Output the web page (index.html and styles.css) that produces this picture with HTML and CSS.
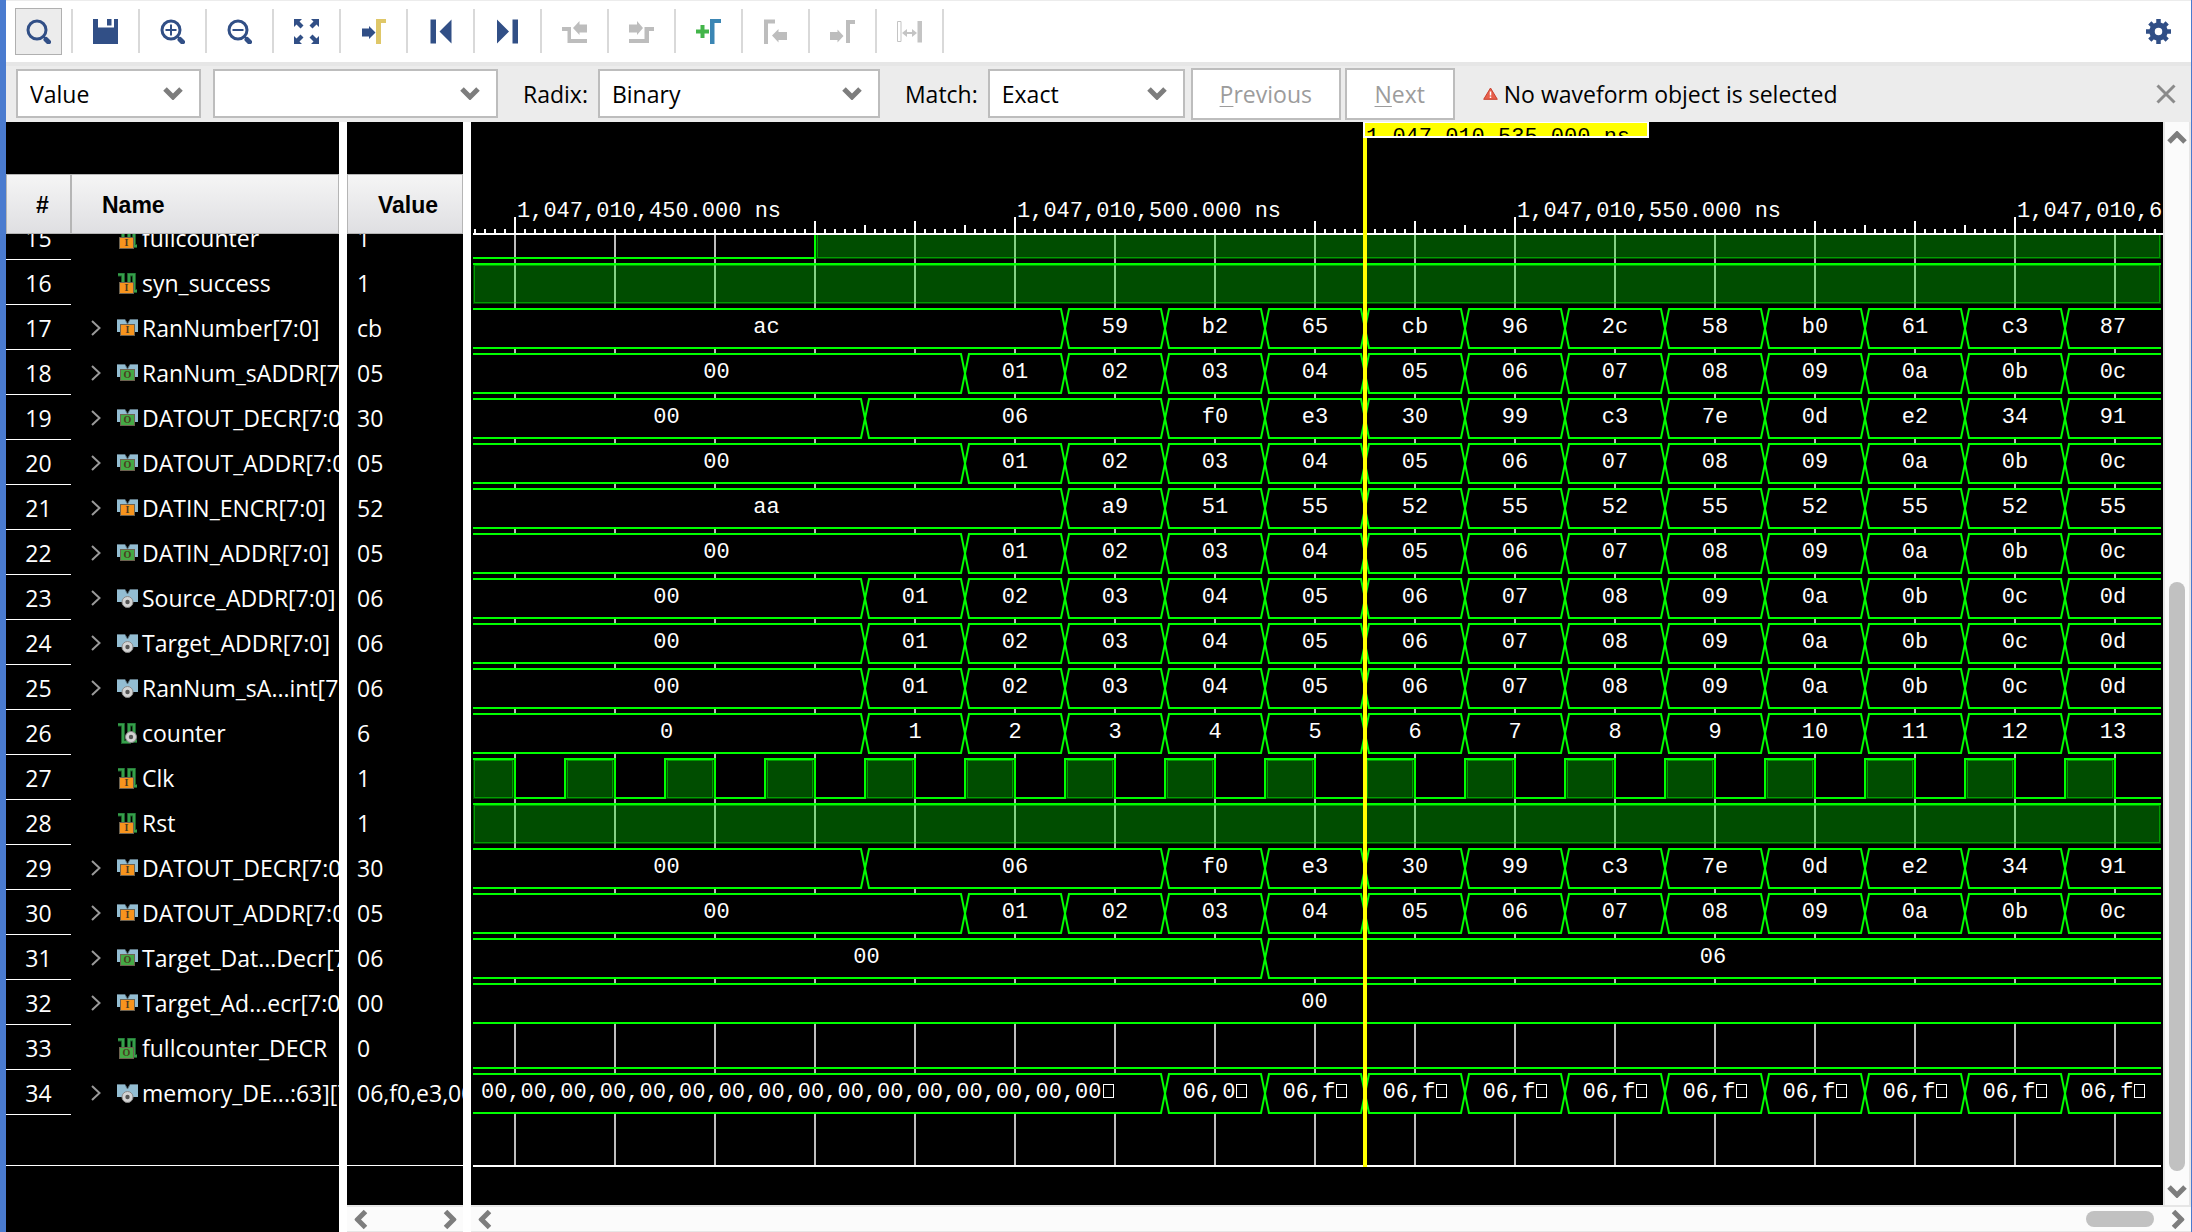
FILE: index.html
```html
<!DOCTYPE html>
<html lang="en">
<head>
<meta charset="utf-8">
<title>Waveform</title>
<link rel="stylesheet" href="styles.css">
</head>
<body>
<svg class="defs" aria-hidden="true">
  <symbol id="chevron" viewBox="0 0 20 13"><path d="M2 2l8 8 8-8" fill="none" stroke="#7d7d7d" stroke-width="5"/></symbol>
  <symbol id="lens" viewBox="0 0 25 25"><circle cx="11" cy="11" r="9" fill="none" stroke="#314f86" stroke-width="3"/><path d="M17 17l3 3" stroke="#314f86" stroke-width="2"/><path d="M20 20.500l2.500 2.500" stroke="#314f86" stroke-width="5" stroke-linecap="round"/></symbol>
  <symbol id="bus" viewBox="0 0 21 21"><path d="M0 1.500H8L10.500 6 13 1.500H21V14H0z" fill="#93bdd2"/><path d="M0 1.500H8L10.500 6 13 1.500H21" fill="none" stroke="#5c7480"/></symbol>
  <symbol id="bit" viewBox="0 0 21 21"><path d="M1 1.500H6V19H12V1.500H17V18H20" fill="none" stroke="#1d5f2b" stroke-width="4"/><path d="M1 1.500H6V19H12V1.500H17V18H20" fill="none" stroke="#35a04a" stroke-width="2"/></symbol>
</svg>
<div class="window">
  <div class="toolbar" role="toolbar" aria-label="Waveform tools">
    <div class="tool"><button class="tool-button active" aria-label="Find"><svg viewBox="0 0 25 25"><use href="#lens"/></svg></button></div>
    <div class="tool"><button class="tool-button" aria-label="Save"><svg viewBox="0 0 25 25" fill="#314f86"><path d="M0 0h5v8.500h16V0h4v25H0zM14 0h4.500v6.500H14z"/></svg></button></div>
    <div class="tool"><button class="tool-button" aria-label="Zoom in"><svg viewBox="0 0 25 25"><use href="#lens"/><path d="M5.500 11h11M11 5.500v11" stroke="#314f86" stroke-width="2"/></svg></button></div>
    <div class="tool"><button class="tool-button" aria-label="Zoom out"><svg viewBox="0 0 25 25"><use href="#lens"/><path d="M5.500 11h11" stroke="#314f86" stroke-width="2"/></svg></button></div>
    <div class="tool"><button class="tool-button" aria-label="Zoom fit"><svg viewBox="0 0 25 25" fill="#314f86"><path d="M0 0h8L5.500 2.500l4 4-3 3-4-4L0 8zM25 0v8l-2.500-2.500-4 4-3-3 4-4L17 0zM0 25v-8l2.500 2.500 4-4 3 3-4 4L8 25zM25 25h-8l2.500-2.500-4-4 3-3 4 4L25 17z"/></svg></button></div>
    <div class="tool"><button class="tool-button" aria-label="Go to cursor"><svg viewBox="0 0 25 25"><path d="M1 9.500h7V7l6.500 6.500L8 20v-2.500H1z" fill="#314f86"/><path d="M15 0h10v4h-5v21h-5z" fill="#dfc768"/></svg></button></div>
    <div class="tool"><button class="tool-button" aria-label="Go to time 0"><svg viewBox="0 0 25 25" fill="#314f86"><path d="M2.500.500H8v24H2.500zM23.500.500v24l-12-12z"/></svg></button></div>
    <div class="tool"><button class="tool-button" aria-label="Go to last time"><svg viewBox="0 0 25 25" fill="#314f86"><path d="M17.500.500H23v24h-5.500zM2 .500v24l12-12z"/></svg></button></div>
    <div class="tool"><button class="tool-button" disabled aria-label="Previous transition"><svg viewBox="0 0 25 25" fill="#bdbdbd"><path d="M0 8h9v12h16v4H5.500V12H0zM11 9l6.500-7v3.500H25v8h-7.500V16z"/></svg></button></div>
    <div class="tool"><button class="tool-button" disabled aria-label="Next transition"><svg viewBox="0 0 25 25" fill="#bdbdbd"><path d="M25 8h-9.500v12H0v4h20V12h5zM14 9L8 2v3.500H0v8h8V16z"/></svg></button></div>
    <div class="tool"><button class="tool-button" aria-label="Add marker"><svg viewBox="0 0 25 25"><path d="M0 12.500h13M6.500 6v13" stroke="#43b54a" stroke-width="4"/><path d="M14 0h11v4h-6.500v21H14z" fill="#3b86b4"/></svg></button></div>
    <div class="tool"><button class="tool-button" disabled aria-label="Previous marker"><svg viewBox="0 0 25 25" fill="#bdbdbd"><path d="M1 .500h11v4H5V25H1zM9 16.500l6.500-6.500v3H24v8h-8.500v2.500z"/></svg></button></div>
    <div class="tool"><button class="tool-button" disabled aria-label="Next marker"><svg viewBox="0 0 25 25" fill="#bdbdbd"><path d="M16 1h9v4h-5v19h-4zM0 13h7.500v-2.500l6 6.500-6 6.500V21H0z"/></svg></button></div>
    <div class="tool"><button class="tool-button" disabled aria-label="Swap cursors"><svg viewBox="0 0 25 25" fill="#c4c4c4"><path d="M.500 2.500h3.500v20H.500z" fill="none" stroke="#c4c4c4"/><path d="M20.500 2H25v21.500h-4.500zM5 14l5-4v3h5v-3l5 4-5 4v-3h-5v3z"/></svg></button></div>
    <button class="tool-button settings" aria-label="Settings"><svg viewBox="0 0 25 25" fill="none" stroke="#314f86"><circle cx="12.500" cy="12.500" r="6.500" stroke-width="5.500"/><path d="M12.500 0v5M12.500 20v5M0 12.500h5M20 12.500h5M3.800 3.800l3.500 3.500M17.700 17.700l3.500 3.500M3.800 21.200l3.500-3.500M17.700 7.300l3.500-3.500" stroke-width="4.500"/></svg></button>
  </div>

  <form class="findbar" onsubmit="return false">
    <div class="combo combo-kind"><select aria-label="Search by"><option>Value</option></select><svg><use href="#chevron"/></svg></div>
    <div class="combo combo-text"><select aria-label="Search value"><option></option></select><svg><use href="#chevron"/></svg></div>
    <label for="radix">Radix:</label>
    <div class="combo combo-radix"><select id="radix"><option>Binary</option></select><svg><use href="#chevron"/></svg></div>
    <label for="match">Match:</label>
    <div class="combo combo-match"><select id="match"><option>Exact</option></select><svg><use href="#chevron"/></svg></div>
    <button class="step previous" disabled><u>P</u>revious</button>
    <button class="step next" disabled><u>N</u>ext</button>
    <p class="status"><svg class="warning" viewBox="0 0 15 13"><path d="M7.500 1L14.300 12.300H.700z" fill="#e8604c" stroke="#c8402e"/><path d="M7.500 4.500v4M7.500 9.500v1.500" stroke="#fff" stroke-width="1.500"/></svg>No waveform object is selected</p>
    <button class="close" aria-label="Close"><svg viewBox="0 0 20 20"><path d="M1.500 1.500l17 17M18.500 1.500l-17 17" stroke="#8b8b8b" stroke-width="3"/></svg></button>
  </form>

  <main class="panes">
    <section class="pane names">
      <table class="grid">
        <thead><tr><th class="num">#</th><th class="name">Name</th></tr></thead>
        <tbody id="names"></tbody>
      </table>
    </section>
    <section class="pane values">
      <table class="grid">
        <thead><tr><th class="value">Value</th></tr></thead>
        <tbody id="values"></tbody>
      </table>
      <div class="hscroll"><button aria-label="Scroll left"><svg class="left"><use href="#chevron"/></svg></button><button aria-label="Scroll right"><svg class="right"><use href="#chevron"/></svg></button></div>
    </section>
    <section class="waves">
      <div class="view">
        <div class="plot">
          <div class="ruler">
            <span class="time"><b>1,047,010,450.000 ns</b></span>
            <span class="time"><b>1,047,010,500.000 ns</b></span>
            <span class="time"><b>1,047,010,550.000 ns</b></span>
            <span class="time"><b>1,047,010,600.000 ns</b></span>
          </div>
          <div class="lanes" id="lanes"></div>
          <div class="cursor"><span class="flag">1,047,010,535.000 ns</span></div>
        </div>
        <div class="vscroll"><button aria-label="Scroll up"><svg class="up"><use href="#chevron"/></svg></button><div class="track"><div class="thumb"></div></div><button aria-label="Scroll down"><svg><use href="#chevron"/></svg></button></div>
      </div>
      <div class="hscroll"><button aria-label="Scroll left"><svg class="left"><use href="#chevron"/></svg></button><div class="track"><div class="thumb"></div></div><button aria-label="Scroll right"><svg class="right"><use href="#chevron"/></svg></button></div>
    </section>
  </main>
</div>
<script src="waves.js"></script>
</body>
</html>
```
FILE: styles.css
```css
* { box-sizing: border-box; }

body {
  margin: 0;
  background: #fff;
  color: #000;
  font: 23px/30px "Open Sans", "Noto Sans", sans-serif;
}

button, select { font: inherit; margin: 0; padding: 0; }
button { border: 0; background: none; }
svg { display: block; }
.defs { position: absolute; width: 0; height: 0; }

.window {
  display: flex;
  flex-direction: column;
  height: 100vh;
  border-left: 6px solid #4a7bcf;
  border-right: 1px solid #4a7bcf;
}

/* Toolbar */
.toolbar {
  display: flex;
  flex: none;
  height: 66px;
  border-top: 1px solid #ececec;
  border-bottom: 4px solid #e6e6e6;
}
.tool {
  display: flex;
  align-items: center;
  height: 44px;
  margin-top: 8px;
  padding: 0 9px;
  border-right: 2px solid #d9d9d9;
}
.tool-button {
  display: grid;
  place-items: center;
  flex: none;
  width: 47px;
  height: 47px;
  border: 1px solid transparent;
}
.tool-button svg { width: 25px; height: 25px; }
.tool-button.active { background: #ececec; border-color: #b0b0b0; }
.settings { margin: 7px 9px 0 auto; }

/* Find bar */
.findbar {
  display: flex;
  align-items: center;
  flex: none;
  height: 56px;
  padding: 0 15px 1px 10px;
  background: #ececec;
}
.combo {
  display: grid;
  align-items: center;
  height: 49px;
}
.combo select {
  grid-area: 1 / 1;
  width: 100%;
  height: 100%;
  padding: 0 12px;
  border: 2px solid #bdbdbd;
  border-radius: 0;
  background: #fff;
  color: #000;
  appearance: none;
}
.combo svg {
  grid-area: 1 / 1;
  justify-self: end;
  width: 20px;
  height: 13px;
  margin-right: 18px;
  pointer-events: none;
}
.combo-kind { width: 185px; }
.combo-text { width: 285px; margin: 0 25px 0 12px; }
.combo-radix { width: 282px; margin: 0 25px 0 10px; }
.combo-match { width: 197px; margin: 0 6px 0 10px; }
.step {
  height: 52px;
  border: 2px solid #bdbdbd;
  background: #fff;
  color: #9c9c9c;
}
.step u { text-decoration-thickness: 1px; text-underline-offset: 3px; }
.previous { width: 150px; margin-right: 4px; }
.next { width: 110px; }
.status {
  display: flex;
  align-items: center;
  gap: 6px;
  margin: 0 0 0 28px;
}
.warning { width: 15px; height: 13px; }
.close { margin-left: auto; }
.close svg { width: 20px; height: 20px; }

/* Panes */
.panes {
  display: flex;
  flex: 1;
  min-height: 0;
  gap: 8px;
}
.pane {
  display: flex;
  flex-direction: column;
  flex: none;
  overflow: hidden;
  background: #000;
  color: #fff;
}
.names { width: 333px; padding: 52px 0 66px; }
.values { width: 116px; padding-top: 52px; }
.values .hscroll { margin-top: 39px; }

.grid {
  display: flex;
  flex-direction: column;
  flex: 1;
  min-height: 0;
  overflow: hidden;
}
.grid thead { display: block; flex: none; color: #000; }
.grid tr { display: flex; height: 45px; }
.grid thead tr { height: 60px; }
.grid th {
  height: 60px;
  padding: 0;
  border: 1px solid #b5b5b5;
  background: linear-gradient(#f5f5f5, #dfdfe2);
  font: bold 23px/60px "Liberation Sans", sans-serif;
  text-align: left;
}
.grid tbody {
  display: block;
  flex: 1;
  min-height: 0;
  overflow: hidden;
  border-bottom: 1px solid #fff;
}
.grid tbody tr:first-child { margin-top: -19px; }
.grid td { padding: 1px 0 0; line-height: 44px; white-space: nowrap; overflow: hidden; }
.grid th.num { width: 65px; padding-left: 29px; }
.grid th.name { flex: 1; padding-left: 30px; }
.grid th.value { flex: 1; padding-left: 30px; }
.grid td.num { width: 65px; border-bottom: 1px solid #fff; text-align: center; }
.grid td.name {
  display: flex;
  align-items: center;
  flex: 1;
  min-width: 0;
  padding-left: 20px;
}
.grid td.value { flex: 1; min-width: 0; padding-left: 10px; }
.expand { flex: none; width: 10px; margin-right: 16px; }
.expand svg { width: 10px; height: 16px; }
.kind { flex: none; width: 21px; height: 21px; margin-right: 4px; }
.kind text { font: bold 10px "Liberation Serif", serif; text-anchor: middle; fill: #4a3a20; }

/* Wave pane */
.waves {
  display: flex;
  flex-direction: column;
  flex: 1;
  min-width: 0;
}
.view { display: flex; flex: 1; min-height: 0; }
.plot {
  position: relative;
  display: flex;
  flex-direction: column;
  flex: 1;
  min-width: 0;
  padding-bottom: 38px;
  overflow: hidden;
  background: #000;
  color: #fff;
  font: 22px/26px "Liberation Mono", monospace;
}

.ruler {
  display: flex;
  align-items: flex-end;
  flex: none;
  height: 113px;
  margin-left: 2px;
  padding: 0 0 4px 43px;
  overflow: hidden;
  border-bottom: 2px solid #fff;
  background-image:
    linear-gradient(90deg, #fff 2px, transparent 2px),
    linear-gradient(90deg, #fff 2px, transparent 2px),
    linear-gradient(90deg, #fff 2px, transparent 2px),
    linear-gradient(90deg, #fff 2px, transparent 2px);
  background-repeat: repeat-x;
  background-size: 10px 4px, 50px 8px, 100px 12px, 500px 16px;
  background-position: 1px 100%, 41px 100%, 41px 100%, 41px 100%;
}
.time { flex: none; width: 500px; }
.time b { display: inline-block; height: 30px; padding-left: 1px; background: #000; font-weight: normal; }

.lanes {
  flex: 1;
  min-height: 0;
  margin: 0 2px;
  overflow: hidden;
  border-bottom: 2px solid #fff;
  background: linear-gradient(90deg, #bebebe 2px, transparent 2px) 41px 0 / 100px 100%;
}
.lane { display: flex; height: 45px; padding: 3px 0 1px; }
.lane:first-child { margin-top: -20px; }

.word {
  flex: none;
  overflow: hidden;
  border: solid #0f0;
  border-width: 2px 0;
  background: #000;
  line-height: 36px;
  text-align: center;
  white-space: nowrap;
}
.word.long { padding-left: 8px; text-align: left; }
.glyph { display: inline-block; width: 11px; height: 14px; margin-left: 1px; border: 1px solid #fff; }
.cross { flex: none; width: 10px; height: 41px; background: #000; }
.cross path { fill: none; stroke: #0f0; stroke-width: 2; }

.bit { display: flex; flex: none; border: 0 solid #0f0; }
.bit + .bit { border-left-width: 2px; }
.low { border-bottom-width: 2px; }
.high { border-top-width: 2px; background: rgba(0, 255, 0, .3); }
.high::before {
  content: "";
  flex: 1;
  margin: 0 1px 1px;
  border: 1px solid rgba(0, 255, 0, .45);
}
.word.rest, .bit.rest { flex: 1; }
.word.rest { padding-right: 5px; }

.cursor {
  position: absolute;
  top: 0;
  bottom: 38px;
  left: 892px;
  width: 4px;
  background: #ff0;
}
.flag {
  display: block;
  width: 286px;
  height: 16px;
  padding-left: 1px;
  overflow: hidden;
  border: solid #fff;
  border-width: 1px 2px 2px;
  background: #ff0;
  color: #000;
  line-height: 30px;
  white-space: nowrap;
}

/* Scroll bars */
.hscroll, .vscroll {
  display: flex;
  flex: none;
  justify-content: space-between;
  align-items: center;
  background: #fbfbfb;
  border: solid #e6e6e6;
}
.hscroll { height: 27px; padding: 0 3px 0 4px; border-width: 2px 0 1px; }
.hscroll button, .vscroll button { display: grid; place-items: center; width: 20px; height: 20px; }
.hscroll button svg, .vscroll button svg { width: 20px; height: 13px; }
.left { transform: rotate(90deg); }
.right { transform: rotate(-90deg); }
.up { transform: rotate(180deg); }
.vscroll { flex-direction: column; width: 28px; padding: 5px 0 4px; border-width: 0 2px; }
.track { display: flex; flex: 1; justify-content: flex-end; }
.vscroll .track { flex-direction: column; padding: 8px 0 10px; }
.thumb { border-radius: 8px; background: #c1c1c1; }
.vscroll .thumb { width: 16px; height: 58%; }
.hscroll .thumb { width: 68px; height: 16px; margin-right: 14px; }
```
FILE: waves.js
```js
// Horizontal scale: 10 px per ns; x positions are measured from the left edge of the lanes.
const EDGE = 92;      // first rising clock edge
const PERIOD = 100;
const at = n => EDGE + n * PERIOD;

const run = (start, words) => words.split(' ').map((text, i) => [at(start + i), text]);
const addr = '01 02 03 04 05 06 07 08 09 0a 0b 0c';
const addrNext = addr + ' 0d';
const decr = [[0, '00'], [at(3), '06'], ...run(6, 'f0 e3 30 99 c3 7e 0d e2 34 91')];
const delayed = [[0, '00'], ...run(4, addr)];
const early = [[0, '00'], ...run(3, addrNext)];
const clock = [[0, 1], [42, 0]];
for (let i = 0; i < 16; i++) clock.push([at(i), 1], [at(i) + 50, 0]);

const signals = [
  [15, 'bit', 'I', 'fullcounter', '1', [[0, 0], [342, 1]]],
  [16, 'bit', 'I', 'syn_success', '1', [[0, 1]]],
  [17, 'bus', 'I', 'RanNumber[7:0]', 'cb', [[0, 'ac'], ...run(5, '59 b2 65 cb 96 2c 58 b0 61 c3 87')]],
  [18, 'bus', 'O', 'RanNum_sADDR[7:0]', '05', delayed],
  [19, 'bus', 'O', 'DATOUT_DECR[7:0]', '30', decr],
  [20, 'bus', 'O', 'DATOUT_ADDR[7:0]', '05', delayed],
  [21, 'bus', 'I', 'DATIN_ENCR[7:0]', '52', [[0, 'aa'], ...run(5, 'a9 51 55 52 55 52 55 52 55 52 55')]],
  [22, 'bus', 'O', 'DATIN_ADDR[7:0]', '05', delayed],
  [23, 'bus', 'S', 'Source_ADDR[7:0]', '06', early],
  [24, 'bus', 'S', 'Target_ADDR[7:0]', '06', early],
  [25, 'bus', 'S', 'RanNum_sA...int[7:0]', '06', early],
  [26, 'int', 'S', 'counter', '6', [[0, '0'], ...run(3, '1 2 3 4 5 6 7 8 9 10 11 12 13')]],
  [27, 'bit', 'I', 'Clk', '1', clock],
  [28, 'bit', 'I', 'Rst', '1', [[0, 1]]],
  [29, 'bus', 'I', 'DATOUT_DECR[7:0]', '30', decr],
  [30, 'bus', 'I', 'DATOUT_ADDR[7:0]', '05', delayed],
  [31, 'bus', 'O', 'Target_Dat...Decr[7:0]', '06', [[0, '00'], [at(7), '06']]],
  [32, 'bus', 'I', 'Target_Ad...ecr[7:0]', '00', [[0, '00']]],
  [33, 'bit', 'O', 'fullcounter_DECR', '0', [[0, 0]]],
  [34, 'bus', 'S', 'memory_DE...:63][7:0]', '06,f0,e3,00', [[0, Array(16).fill('00').join(',') + '~'],
    ...run(6, '06,0~ 06,f~ 06,f~ 06,f~ 06,f~ 06,f~ 06,f~ 06,f~ 06,f~ 06,f~')]],
];

function badge(shape, dir) {
  const y = shape === 'bus' ? 6 : 9;
  const x = shape === 'bus' ? 3 : 2;
  if (dir === 'S') {
    const cx = shape === 'bus' ? 10.5 : 14;
    return `<circle cx="${cx}" cy="14" r="5.5" fill="#d4d4d4" stroke="#8a8a8a"/><circle cx="${cx}" cy="14" r="2.2" fill="#555"/>`;
  }
  const fill = dir === 'I' ? '#f7941e' : '#45a945';
  return `<rect x="${x}.5" y="${y}.5" width="14" height="11" fill="${fill}" stroke="#6d6250"/><text x="${x + 7.5}" y="${y + 9}">${dir}</text>`;
}

function lane(shape, points) {
  if (shape === 'bit') {
    return points.map(([x, v], i) => {
      const end = i + 1 < points.length ? points[i + 1][0] - 1 : null;
      const start = i ? x - 1 : 0;
      const cls = v ? 'high' : 'low';
      return end === null ? `<div class="bit rest ${cls}"></div>`
        : `<div class="bit ${cls}" style="width:${end - start}px"></div>`;
    }).join('');
  }
  return points.map(([x, v], i) => {
    const start = i ? x + 5 : 0;
    const text = v.replace('~', '<i class="glyph"></i>');
    const long = v.length > 20 ? ' long' : '';
    const cross = i ? '<svg class="cross" viewBox="0 0 10 41"><path d="M0 1h1L9 40h1M0 40h1L9 1h1"/></svg>' : '';
    return cross + (i + 1 < points.length
      ? `<div class="word${long}" style="width:${points[i + 1][0] - 5 - start}px">${text}</div>`
      : `<div class="word rest">${text}</div>`);
  }).join('');
}

const arrow = '<svg viewBox="0 0 10 16"><path d="M1 1l7.500 7L1 15" fill="none" stroke="#999" stroke-width="2"/></svg>';
const fill = (id, html) => { document.getElementById(id).innerHTML = html; };

fill('names', signals.map(([n, shape, dir, name]) =>
  `<tr><td class="num">${n}</td><td class="name"><span class="expand">${shape === 'bus' ? arrow : ''}</span>` +
  `<svg class="kind" viewBox="0 0 21 21"><use href="#${shape === 'bus' ? 'bus' : 'bit'}"/>${badge(shape, dir)}</svg>${name}</td></tr>`).join(''));
fill('values', signals.map(s => `<tr><td class="value">${s[4]}</td></tr>`).join(''));
fill('lanes', signals.map(s => `<div class="lane">${lane(s[1], s[5])}</div>`).join(''));
```
